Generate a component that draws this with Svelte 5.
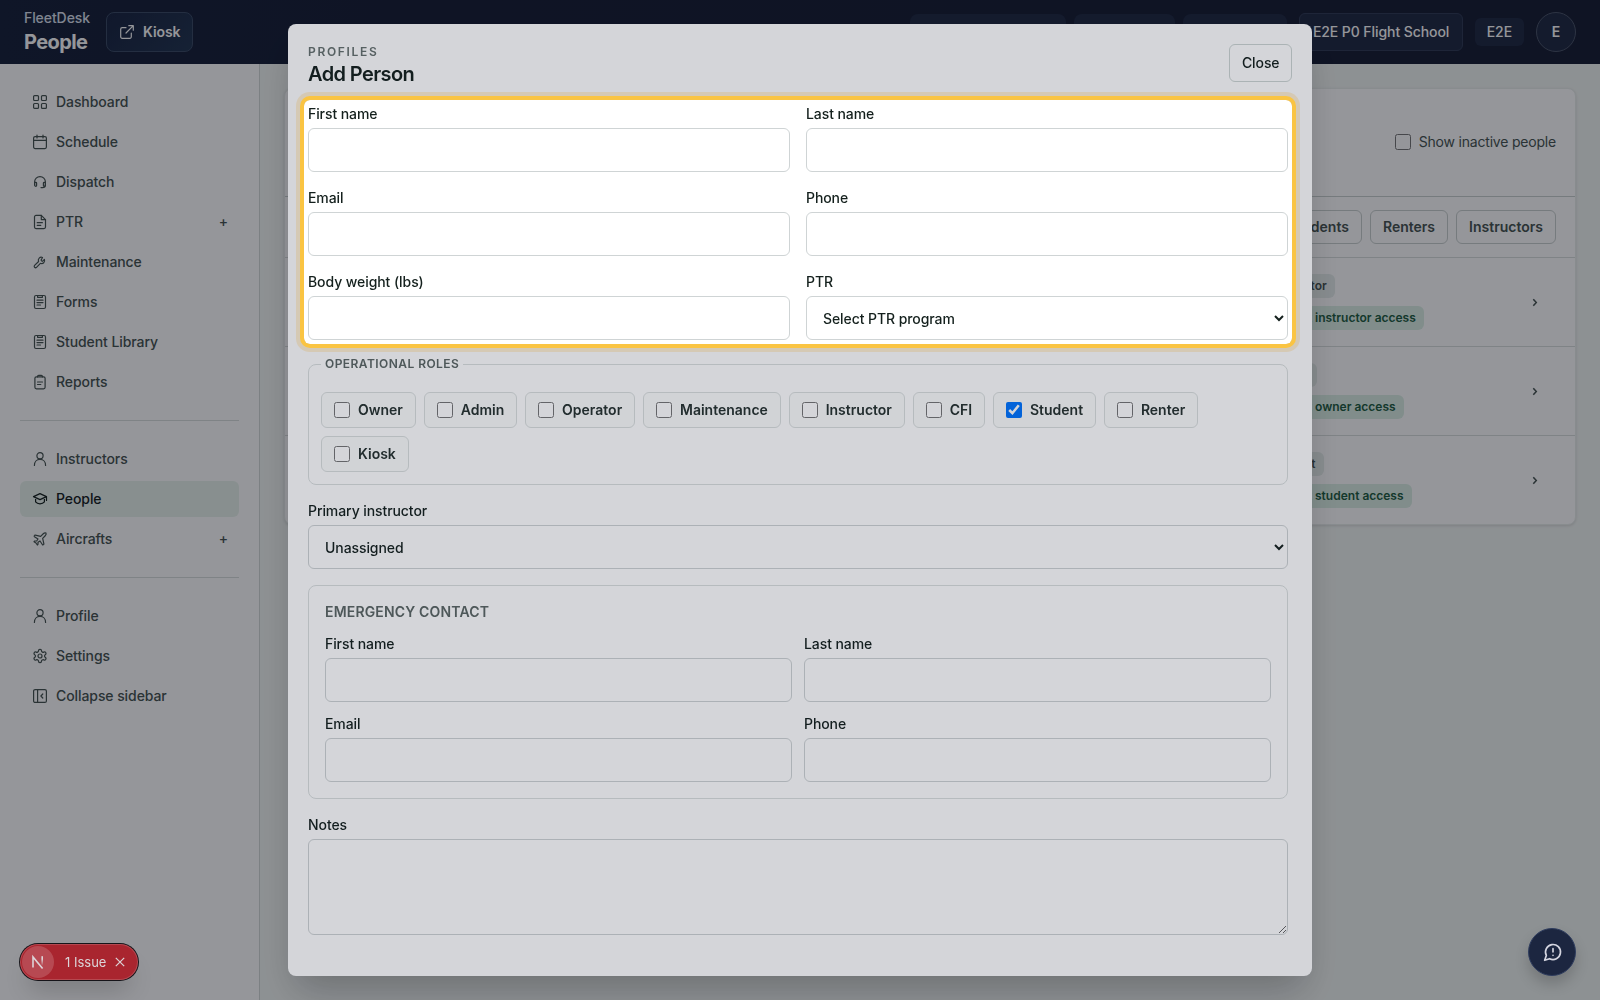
<script lang="ts">
	type NavItem = { label: string; icon: string; plus?: boolean; active?: boolean };

	const navGroups: NavItem[][] = [
		[
			{ label: 'Dashboard', icon: 'grid' },
			{ label: 'Schedule', icon: 'calendar' },
			{ label: 'Dispatch', icon: 'headset' },
			{ label: 'PTR', icon: 'file', plus: true },
			{ label: 'Maintenance', icon: 'wrench' },
			{ label: 'Forms', icon: 'form' },
			{ label: 'Student Library', icon: 'form' },
			{ label: 'Reports', icon: 'clipboard' }
		],
		[
			{ label: 'Instructors', icon: 'user' },
			{ label: 'People', icon: 'cap', active: true },
			{ label: 'Aircrafts', icon: 'plane', plus: true }
		],
		[
			{ label: 'Profile', icon: 'user' },
			{ label: 'Settings', icon: 'gear' },
			{ label: 'Collapse sidebar', icon: 'collapse' }
		]
	];

	const people = [
		{ role: 'Instructor', access: 'Default instructor access' },
		{ role: 'Owner', access: 'Default owner access' },
		{ role: 'Student', access: 'Default student access' }
	];

	let roles = $state([
		{ label: 'Owner', checked: false },
		{ label: 'Admin', checked: false },
		{ label: 'Operator', checked: false },
		{ label: 'Maintenance', checked: false },
		{ label: 'Instructor', checked: false },
		{ label: 'CFI', checked: false },
		{ label: 'Student', checked: true },
		{ label: 'Renter', checked: false },
		{ label: 'Kiosk', checked: false }
	]);
</script>

{#snippet icon(name: string)}
	<svg class="icon" viewBox="0 0 16 16" aria-hidden="true">
		{#if name === 'grid'}
			<rect x="1.6" y="1.6" width="4.9" height="4.9" rx="1" />
			<rect x="9.5" y="1.6" width="4.9" height="4.9" rx="1" />
			<rect x="1.6" y="9.5" width="4.9" height="4.9" rx="1" />
			<rect x="9.5" y="9.5" width="4.9" height="4.9" rx="1" />
		{:else if name === 'calendar'}
			<rect x="1.6" y="2.6" width="12.8" height="12" rx="1.5" />
			<path d="M1.6 6.3h12.8M5 1v3M11 1v3" />
		{:else if name === 'headset'}
			<path d="M2.6 11V8a5.4 5.4 0 0 1 10.8 0v3c0 1.8-1 2.6-3 2.6H9" />
			<path d="M2.6 8.3h1.2c.5 0 .8.3.8.8v2.4c0 .5-.3.8-.8.8-.7 0-1.2-.5-1.2-1.2zM13.4 8.3h-1.2c-.5 0-.8.3-.8.8v2.4c0 .5.3.8.8.8.7 0 1.2-.5 1.2-1.2z" />
		{:else if name === 'file'}
			<path d="M9.3 1.4H4A1.5 1.5 0 0 0 2.5 2.9v10.2A1.5 1.5 0 0 0 4 14.6h8a1.5 1.5 0 0 0 1.5-1.5V5.6z" />
			<path d="M9.3 1.4v4.2h4.2M5.2 8.7h5.2M5.2 11.3h3.6" />
		{:else if name === 'wrench'}
			<path d="M9.5 5.3a.6.6 0 0 0 0 .8l.6.6a.6.6 0 0 0 .8 0l1.7-1.7a3 3 0 0 1-4 3.9l-3.9 4a1.3 1.3 0 0 1-1.9-1.9l4-3.9a3 3 0 0 1 3.9-4z" transform="translate(-.2 .4)" />
		{:else if name === 'form'}
			<rect x="2.5" y="1.5" width="11" height="13" rx="1.5" />
			<path d="M5.6 1.6v1.7h4.8V1.6M5 6.2h6M5 8.6h6M5 11h3.5" />
		{:else if name === 'clipboard'}
			<rect x="2.9" y="2.8" width="10.2" height="12" rx="1.5" />
			<path d="M5.6 3V2.3c0-.6.4-1 1-1h2.8c.6 0 1 .4 1 1V3M5.500 8h5M5.500 10.500h3.300" />
		{:else if name === 'user'}
			<circle cx="8" cy="4.8" r="3.1" />
			<path d="M2.4 14.4c0-3.5 2.2-6 5.6-6s5.600 2.500 5.600 6" />
		{:else if name === 'cap'}
			<path d="M8 2.6 1.5 5.6 8 8.6l6.500-3zM14.500 5.600v3.800M3.600 6.700v4.200c1 1.300 2.600 1.900 4.400 1.900s3.400-.6 4.400-1.900V6.700" />
		{:else if name === 'plane'}
			<path class="scaled" d="M17.8 19.2 16 11l3.5-3.5C21 6 21.5 4 21 3c-1-.5-3 0-4.5 1.5L13 8 4.8 6.2c-.5-.1-.9.1-1.100.5l-.3.5c-.2.5-.1 1 .3 1.300L9 12l-2 3H4l-1 1 3 2 2 3 1-1v-3l3-2 3.500 5.300c.3.4.8.5 1.300.3l.5-.2c.4-.3.6-.7.5-1.200z" />
		{:else if name === 'gear'}
			<path class="scaled" d="M12.22 2h-.44a2 2 0 0 0-2 2v.18a2 2 0 0 1-1 1.73l-.43.25a2 2 0 0 1-2 0l-.15-.08a2 2 0 0 0-2.73.73l-.22.38a2 2 0 0 0 .73 2.73l.15.1a2 2 0 0 1 1 1.72v.51a2 2 0 0 1-1 1.74l-.15.09a2 2 0 0 0-.73 2.73l.22.38a2 2 0 0 0 2.73.73l.15-.08a2 2 0 0 1 2 0l.43.25a2 2 0 0 1 1 1.73V20a2 2 0 0 0 2 2h.44a2 2 0 0 0 2-2v-.18a2 2 0 0 1 1-1.73l.43-.25a2 2 0 0 1 2 0l.15.08a2 2 0 0 0 2.73-.73l.22-.39a2 2 0 0 0-.73-2.73l-.15-.08a2 2 0 0 1-1-1.74v-.5a2 2 0 0 1 1-1.74l.15-.09a2 2 0 0 0 .73-2.73l-.22-.38a2 2 0 0 0-2.73-.73l-.15.08a2 2 0 0 1-2 0l-.43-.25a2 2 0 0 1-1-1.73V4a2 2 0 0 0-2-2z" />
			<circle cx="8" cy="8" r="2" />
		{:else if name === 'collapse'}
			<rect x="1.6" y="1.6" width="12.8" height="12.8" rx="1.5" />
			<path d="M5.6 1.6v12.8M10.8 6 8.9 8l1.9 2" />
		{:else if name === 'external'}
			<path d="M9.8 1.7h4.5v4.5M14.3 1.7 7 9M12.3 9v3.8a1.5 1.5 0 0 1-1.5 1.5H3.2a1.5 1.5 0 0 1-1.500-1.500V5.200a1.500 1.500 0 0 1 1.500-1.500H7" />
		{/if}
	</svg>
{/snippet}

<div class="app">
	<header class="topbar">
		<div class="brand">
			<span class="brand-name">FleetDesk</span>
			<span class="brand-page">People</span>
		</div>
		<button class="kiosk">
			{@render icon('external')}
			Kiosk
		</button>
		<div class="topbar-right">
			<div class="stats">
				<span class="stat wide"></span>
				<span class="stat mid"></span>
				<span class="stat"></span>
			</div>
			<span class="school">E2E P0 Flight School</span>
			<span class="tenant">E2E</span>
			<span class="avatar">E</span>
		</div>
	</header>

	<div class="body">
		<nav class="sidebar">
			{#each navGroups as group}
				<div class="nav-group">
					{#each group as item}
						<div class="nav-item" class:active={item.active}>
							{@render icon(item.icon)}
							<span>{item.label}</span>
							{#if item.plus}
								<span class="plus">+</span>
							{/if}
						</div>
					{/each}
				</div>
			{/each}
		</nav>

		<main>
			<section class="card">
				<div class="card-head">
					<label class="inactive">
						<input type="checkbox" />
						Show inactive people
					</label>
				</div>
				<div class="filters">
					<button>Students</button>
					<button>Renters</button>
					<button>Instructors</button>
				</div>
				{#each people as person}
					<div class="person">
						<div class="badges">
							<span class="badge">{person.role}</span>
							<span class="badge access">{person.access}</span>
						</div>
						<svg class="chevron" viewBox="0 0 6 10" aria-hidden="true">
							<path d="M1.300 2.200 4.300 5.500l-3 3.300" />
						</svg>
					</div>
				{/each}
			</section>
		</main>
	</div>
</div>

<div class="backdrop">
	<div class="modal" role="dialog" aria-label="Add Person">
		<div class="modal-head">
			<div>
				<p class="eyebrow">Profiles</p>
				<h2>Add Person</h2>
			</div>
			<button class="close">Close</button>
		</div>

		<form>
			<div class="fields">
				<div class="spotlight"></div>
				<label>First name <input /></label>
				<label>Last name <input /></label>
				<label>Email <input /></label>
				<label>Phone <input /></label>
				<label>Body weight (lbs) <input /></label>
				<label>
					PTR
					<select>
						<option>Select PTR program</option>
					</select>
				</label>
			</div>

			<fieldset>
				<legend>Operational roles</legend>
				<div class="roles">
					{#each roles as role}
						<label class="role">
							<input type="checkbox" bind:checked={role.checked} />
							{role.label}
						</label>
					{/each}
				</div>
			</fieldset>

			<label>
				Primary instructor
				<select>
					<option>Unassigned</option>
				</select>
			</label>

			<section class="emergency">
				<h3>Emergency contact</h3>
				<div class="fields compact">
					<label>First name <input /></label>
					<label>Last name <input /></label>
					<label>Email <input /></label>
					<label>Phone <input /></label>
				</div>
			</section>

			<label>Notes <textarea></textarea></label>
		</form>
	</div>
</div>

<div class="issues">
	<span class="issues-logo">
		<svg viewBox="0 0 16 16" aria-hidden="true">
			<defs>
				<linearGradient id="fade" x1="0" y1="0" x2="0" y2="1">
					<stop offset="0.3" stop-color="#dcd5d9" />
					<stop offset="1" stop-color="#dcd5d9" stop-opacity="0" />
				</linearGradient>
			</defs>
			<path d="M3 13.600V2.900L12.600 14.600" fill="none" stroke="#dcd5d9" stroke-width="1.600" />
			<rect x="11.400" y="2.200" width="1.600" height="9.500" fill="url(#fade)" />
		</svg>
	</span>
	<span class="issues-text">1 Issue</span>
	<svg class="issues-close" viewBox="0 0 10 10" aria-hidden="true">
		<path d="M.8.8l8.400 8.400M9.200.8.8 9.200" />
	</svg>
</div>

<button class="feedback" aria-label="Feedback">
	<svg viewBox="0 0 24 24" aria-hidden="true">
		<path d="M7.900 20A9 9 0 1 0 4 16.100L2 22Z" />
		<path d="M12 8v4M12 16h.01" />
	</svg>
</button>

<style>
	:global(body) {
		margin: 0;
		overflow: hidden;
		font-family: Inter, 'Liberation Sans', sans-serif;
		font-size: 14px;
		line-height: 20px;
		letter-spacing: -0.08px;
		color: #14201d;
	}

	* {
		box-sizing: border-box;
	}

	button,
	input,
	select,
	textarea {
		font: inherit;
		letter-spacing: inherit;
		color: inherit;
	}

	.app {
		height: 100vh;
		display: flex;
		flex-direction: column;
		background: #f2f6f3;
	}

	.icon {
		width: 16px;
		height: 16px;
		flex: none;
		fill: none;
		stroke: currentColor;
		stroke-width: 1.2;
		stroke-linecap: round;
		stroke-linejoin: round;
	}

	/* paths drawn on a 24 unit grid */
	.scaled {
		transform: scale(0.6667);
		stroke-width: 1.8;
	}

	/* top bar */
	.topbar {
		height: 64px;
		flex: none;
		display: flex;
		align-items: center;
		padding: 0 24px;
		background: linear-gradient(90deg, #152038, #151c33 30%, #151c31);
		color: #fff;
	}

	.brand {
		display: flex;
		flex-direction: column;
		width: 66px;
		margin-right: 16px;
	}

	.brand-name {
		font-weight: 500;
		color: #dde2ee;
	}

	.brand-page {
		font-size: 20px;
		font-weight: 700;
		line-height: 28px;
		letter-spacing: -0.6px;
	}

	.kiosk {
		height: 40px;
		display: flex;
		align-items: center;
		gap: 8px;
		padding: 0 12px;
		border: 1px solid #3a4a64;
		border-radius: 8px;
		background: linear-gradient(135deg, #18233f, #21344f);
		font-weight: 600;
	}

	.topbar-right {
		margin-left: auto;
		display: flex;
		align-items: center;
		gap: 12px;
		font-weight: 500;
	}

	.stats {
		display: flex;
		gap: 8px;
	}

	.stat {
		width: 104px;
		height: 36px;
		border-radius: 8px;
		background: #1f2942;
	}

	.stat.mid {
		width: 101px;
	}

	.stat.wide {
		width: 156px;
	}

	.school {
		padding: 8px 12.5px;
		border: 1px solid #303b55;
		border-radius: 6px;
		background: #1f2942;
	}

	.tenant {
		padding: 4px 12px;
		border-radius: 6px;
		background: #1f2942;
	}

	.avatar {
		width: 40px;
		height: 40px;
		display: grid;
		place-items: center;
		border: 1px solid #4a5468;
		border-radius: 50%;
		background: #1f2942;
		font-weight: 600;
	}

	/* sidebar */
	.body {
		flex: 1;
		display: flex;
	}

	.sidebar {
		width: 260px;
		flex: none;
		padding: 20px;
		border-right: 1px solid #d3d9d7;
		background: #fff;
	}

	.nav-group {
		display: flex;
		flex-direction: column;
		gap: 4px;
	}

	.nav-group + .nav-group {
		margin-top: 20px;
		padding-top: 20px;
		border-top: 1px solid #d9dedc;
	}

	.nav-item {
		height: 36px;
		display: flex;
		align-items: center;
		gap: 8px;
		padding: 0 11px 0 12px;
		border-radius: 6px;
		font-weight: 500;
		color: #45524f;
	}

	.nav-item.active {
		background: #e9f3ec;
		color: #14201d;
	}

	.plus {
		margin-left: auto;
	}

	/* people list */
	main {
		flex: 1;
		padding: 24px;
	}

	.card {
		border: 1px solid #e9edeb;
		border-radius: 8px;
		background: #fff;
		box-shadow: 0 1px 3px rgba(0, 0, 0, 0.12);
		color: #45524f;
	}

	.card-head {
		height: 108px;
		display: flex;
		align-items: center;
		justify-content: flex-end;
		padding: 0 19px 2px;
		border-bottom: 1px solid #c9d0ce;
	}

	.inactive {
		display: flex;
		align-items: center;
		gap: 8px;
	}

	input[type='checkbox'] {
		width: 16px;
		height: 16px;
		margin: 0;
	}

	.filters {
		height: 60px;
		display: flex;
		align-items: center;
		justify-content: flex-end;
		gap: 8px;
		padding: 0 19px;
	}

	.filters button {
		height: 34px;
		padding: 0 12px;
		border: 1px solid #c9d0ce;
		border-radius: 6px;
		background: #fff;
		font-weight: 600;
		letter-spacing: 0;
	}

	.person {
		height: 89px;
		display: flex;
		align-items: center;
		justify-content: flex-end;
		gap: 24px;
		padding: 0 37px;
		border-top: 1px solid #d9dedc;
	}

	.badges {
		width: 246px;
		display: flex;
		flex-direction: column;
		align-items: flex-start;
		gap: 8px;
	}

	.badge {
		padding: 4px 8px;
		border-radius: 6px;
		background: #e7eeeb;
		font-size: 12px;
		font-weight: 600;
		line-height: 16px;
		letter-spacing: 0;
	}

	.badge.access {
		background: #dcf0e5;
		color: #1d5c40;
	}

	.chevron {
		width: 6px;
		height: 10px;
		fill: none;
		stroke: currentColor;
		stroke-width: 1.5;
	}

	/* add person dialog */
	.backdrop {
		position: fixed;
		inset: 0;
		z-index: 30;
		display: flex;
		justify-content: center;
		padding: 24px;
		background: rgba(0, 0, 0, 0.3);
	}

	.modal {
		width: 1024px;
		padding: 20px;
		border-radius: 8px;
		background: #fff;
		box-shadow: 0 20px 36px -8px rgba(0, 0, 0, 0.25);
	}

	.modal-head {
		display: flex;
		align-items: flex-start;
		justify-content: space-between;
		margin-bottom: 16px;
	}

	.eyebrow {
		margin: 0;
		font-size: 12px;
		font-weight: 600;
		line-height: 16px;
		letter-spacing: 1.68px;
		text-transform: uppercase;
		color: #66716e;
	}

	h2 {
		margin: 0;
		font-size: 20px;
		font-weight: 600;
		line-height: 28px;
		letter-spacing: -0.6px;
	}

	.close {
		height: 38px;
		padding: 0 11.5px;
		border: 1px solid #cdd6d3;
		border-radius: 6px;
		background: #fff;
		font-weight: 500;
	}

	form {
		display: flex;
		flex-direction: column;
		gap: 16px;
		padding-right: 4px;
	}

	.fields {
		position: relative;
		display: grid;
		grid-template-columns: 1fr 1fr;
		gap: 16px;
	}

	.fields.compact {
		gap: 12px;
	}

	/* tour highlight: dims everything except the fields it surrounds */
	.spotlight {
		position: absolute;
		inset: -4px;
		border-radius: 6px;
		box-shadow:
			0 0 0 4px #fac442,
			0 0 0 8px rgba(217, 160, 50, 0.22),
			0 0 0 9999px rgba(15, 23, 42, 0.18);
		pointer-events: none;
		z-index: 60;
	}

	label {
		display: flex;
		flex-direction: column;
		gap: 4px;
		font-weight: 500;
	}

	label input:not([type='checkbox']),
	select,
	textarea {
		width: 100%;
		height: 44px;
		padding: 0 12px;
		border: 1px solid #cfd4d5;
		border-radius: 6px;
		background: #fff;
	}

	textarea {
		height: 96px;
	}

	fieldset {
		min-width: 0;
		margin: 0;
		padding: 20px 12px 12px;
		border: 1px solid #dbe0df;
		border-radius: 8px;
	}

	legend {
		padding: 0 4px;
		font-size: 12px;
		font-weight: 600;
		line-height: 16px;
		letter-spacing: 0.44px;
		text-transform: uppercase;
		color: #5c6764;
	}

	.roles {
		display: flex;
		flex-wrap: wrap;
		gap: 8px;
	}

	.role,
	.inactive {
		flex-direction: row;
	}

	.inactive {
		font-weight: 400;
		letter-spacing: -0.2px;
	}

	.role {
		height: 36px;
		align-items: center;
		gap: 8px;
		padding: 0 11.8px 0 12px;
		border: 1px solid #dbe0df;
		border-radius: 6px;
		background: #fcfdfc;
		font-weight: 600;
		letter-spacing: 0;
		color: #26322f;
	}

	.emergency {
		padding: 16px;
		border: 1px solid #dbe0df;
		border-radius: 8px;
	}

	h3 {
		margin: 0 0 12px;
		font-size: 14px;
		font-weight: 600;
		line-height: 20px;
		letter-spacing: 0.17px;
		text-transform: uppercase;
		color: #5c6764;
	}

	/* floating widgets */
	.issues {
		position: fixed;
		left: 20px;
		bottom: 20px;
		z-index: 31;
		width: 118px;
		height: 36px;
		display: flex;
		align-items: center;
		padding: 2px;
		border-radius: 18px;
		background: #a9252f;
		box-shadow:
			0 0 0 1px #161419,
			inset 0 0 0 1px rgba(255, 255, 255, 0.16),
			0 16px 24px -8px rgba(0, 0, 0, 0.22);
		color: #dcd5d9;
	}

	.issues-logo {
		width: 32px;
		height: 32px;
		display: grid;
		place-items: center;
		border-radius: 50%;
		background: rgba(255, 255, 255, 0.17);
	}

	.issues-logo svg {
		width: 16px;
		height: 16px;
	}

	.issues-text {
		margin: 0 9px 0 11px;
		font-size: 13px;
		letter-spacing: 0;
	}

	.issues-close {
		width: 10px;
		height: 10px;
		stroke: #dcd5d9;
		stroke-width: 1.2;
	}

	.feedback {
		position: fixed;
		right: 24px;
		bottom: 24px;
		z-index: 31;
		width: 48px;
		height: 48px;
		display: grid;
		place-items: center;
		padding: 0;
		border: 1px solid #2f3d5e;
		border-radius: 50%;
		background: #1c2640;
		box-shadow: 0 8px 14px rgba(0, 0, 0, 0.18);
		color: #d4d5e0;
	}

	.feedback svg {
		width: 20px;
		height: 20px;
		margin-left: 1px;
		fill: none;
		stroke: currentColor;
		stroke-width: 2;
		stroke-linecap: round;
		stroke-linejoin: round;
	}
</style>
